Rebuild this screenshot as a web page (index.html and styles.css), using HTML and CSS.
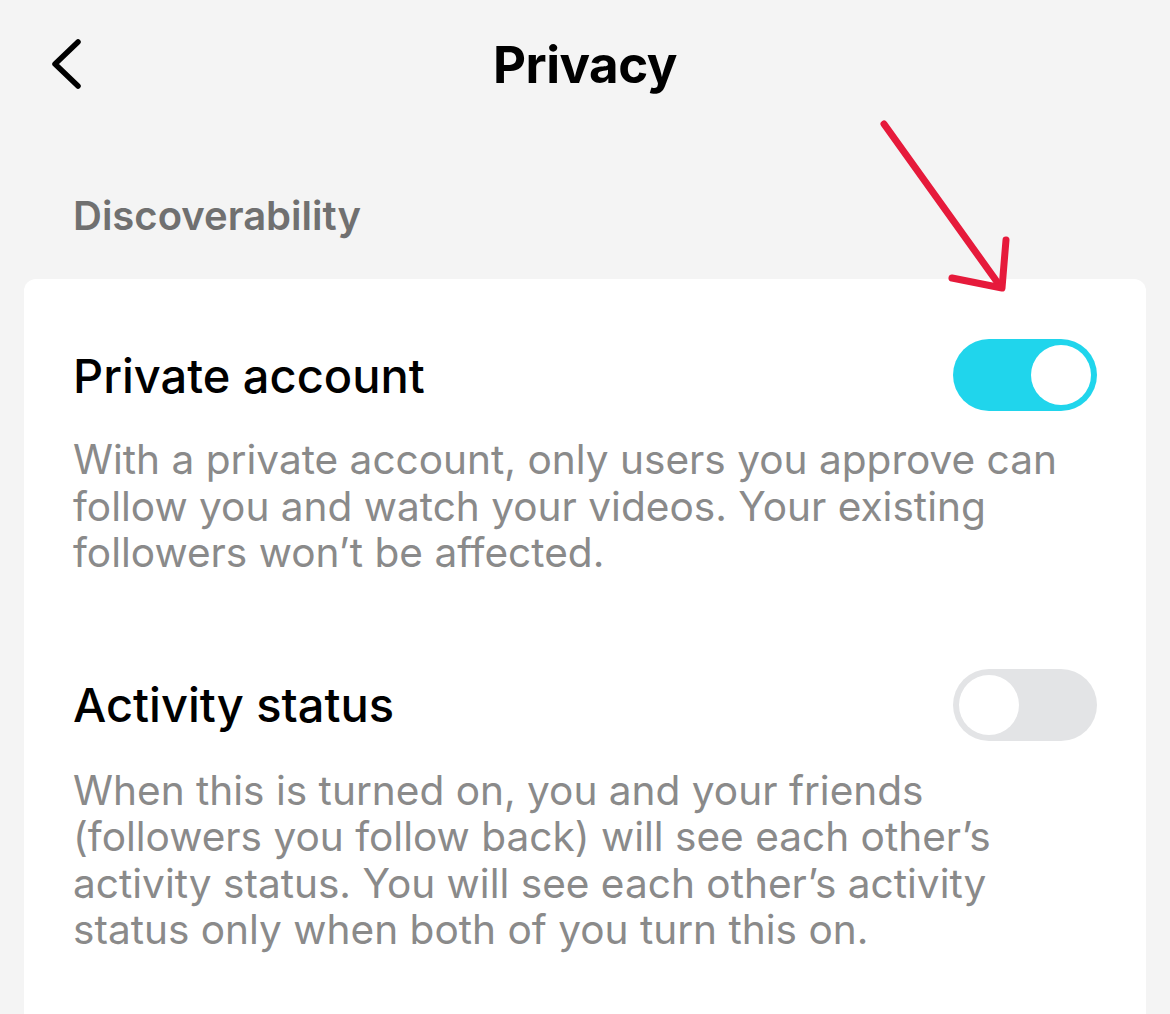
FILE: index.html
```html
<!DOCTYPE html>
<html lang="en">
<head>
    <meta charset="UTF-8">
    <meta name="viewport" content="width=device-width, initial-scale=1.0">
    <title>Privacy</title>
    <link rel="stylesheet" href="styles.css">
</head>
<body>
    <header class="topbar">
        <button class="back-btn" aria-label="Back">
            <svg width="36" height="52" viewBox="0 0 36 52">
                <path d="M30 4 L7 26 L30 48" fill="none" stroke="#000" stroke-width="5.5" stroke-linecap="round" stroke-linejoin="round"/>
            </svg>
        </button>
        <h1>Privacy</h1>
    </header>

    <div class="section-label">Discoverability</div>

    <div class="card">
        <div class="setting">
            <div class="setting-head">
                <h2>Private account</h2>
                <div class="toggle on"><span class="knob"></span></div>
            </div>
            <p>With a private account, only users you approve can follow you and watch your videos. Your existing followers won’t be affected.</p>
        </div>

        <div class="setting">
            <div class="setting-head">
                <h2>Activity status</h2>
                <div class="toggle"><span class="knob"></span></div>
            </div>
            <p>When this is turned on, you and your friends (followers you follow back) will see each other’s activity status. You will see each other’s activity status only when both of you turn this on.</p>
        </div>
    </div>

    <!-- annotation arrow pointing at the toggle -->
    <svg class="arrow" width="160" height="200" viewBox="0 0 160 200">
        <g fill="none" stroke="#e61a3b" stroke-width="7" stroke-linecap="round" stroke-linejoin="round">
            <path d="M22 4 L138 166"/>
            <path d="M90 158 L140 168 L144 120"/>
        </g>
    </svg>
</body>
</html>
```

FILE: styles.css
```css
body {
    margin: 0;
    background: #f4f4f4;
    font-family: Inter, "Noto Sans", sans-serif;
    width: 1170px;
    height: 1014px;
    overflow: hidden;
    position: relative;
}
.topbar {
    height: 128px;
    display: flex;
    align-items: center;
    justify-content: center;
    position: relative;
}
.topbar h1 {
    margin: 0;
    font-size: 51px;
    font-weight: 700;
    color: #000;
    letter-spacing: -0.5px;
}
.back-btn {
    position: absolute;
    left: 48px;
    top: 38px;
    background: none;
    border: none;
    padding: 0;
}
.section-label {
    padding: 0 0 0 73px;
    height: 151px;
    box-sizing: border-box;
    padding-top: 63px;
    font-size: 40px;
    font-weight: 600;
    color: #707070;
}
.card {
    margin: 0 24px;
    background: #fff;
    border-radius: 12px 12px 0 0;
    padding: 58px 49px 0 49px;
    height: 735px;
    box-sizing: border-box;
}
.setting {
    margin-bottom: 90px;
}
.setting-head {
    display: flex;
    justify-content: space-between;
    align-items: center;
    height: 76px;
}
.setting h2 {
    margin: 0;
    font-size: 47px;
    font-weight: 500;
    color: #000;
}
.setting p {
    margin: 24px 0 0 0;
    font-size: 40.6px;
    line-height: 46.5px;
    color: #8a8a8a;
    max-width: 1020px;
}
.setting + .setting p {
    margin-top: 25px;
}
.toggle {
    width: 144px;
    height: 72px;
    border-radius: 36px;
    background: #e3e4e6;
    position: relative;
}
.toggle .knob {
    position: absolute;
    top: 6px;
    left: 6px;
    width: 60px;
    height: 60px;
    border-radius: 50%;
    background: #fff;
}
.toggle.on {
    background: #20d5ec;
}
.toggle.on .knob {
    left: auto;
    right: 6px;
}
.arrow {
    position: absolute;
    left: 862px;
    top: 120px;
}
```
